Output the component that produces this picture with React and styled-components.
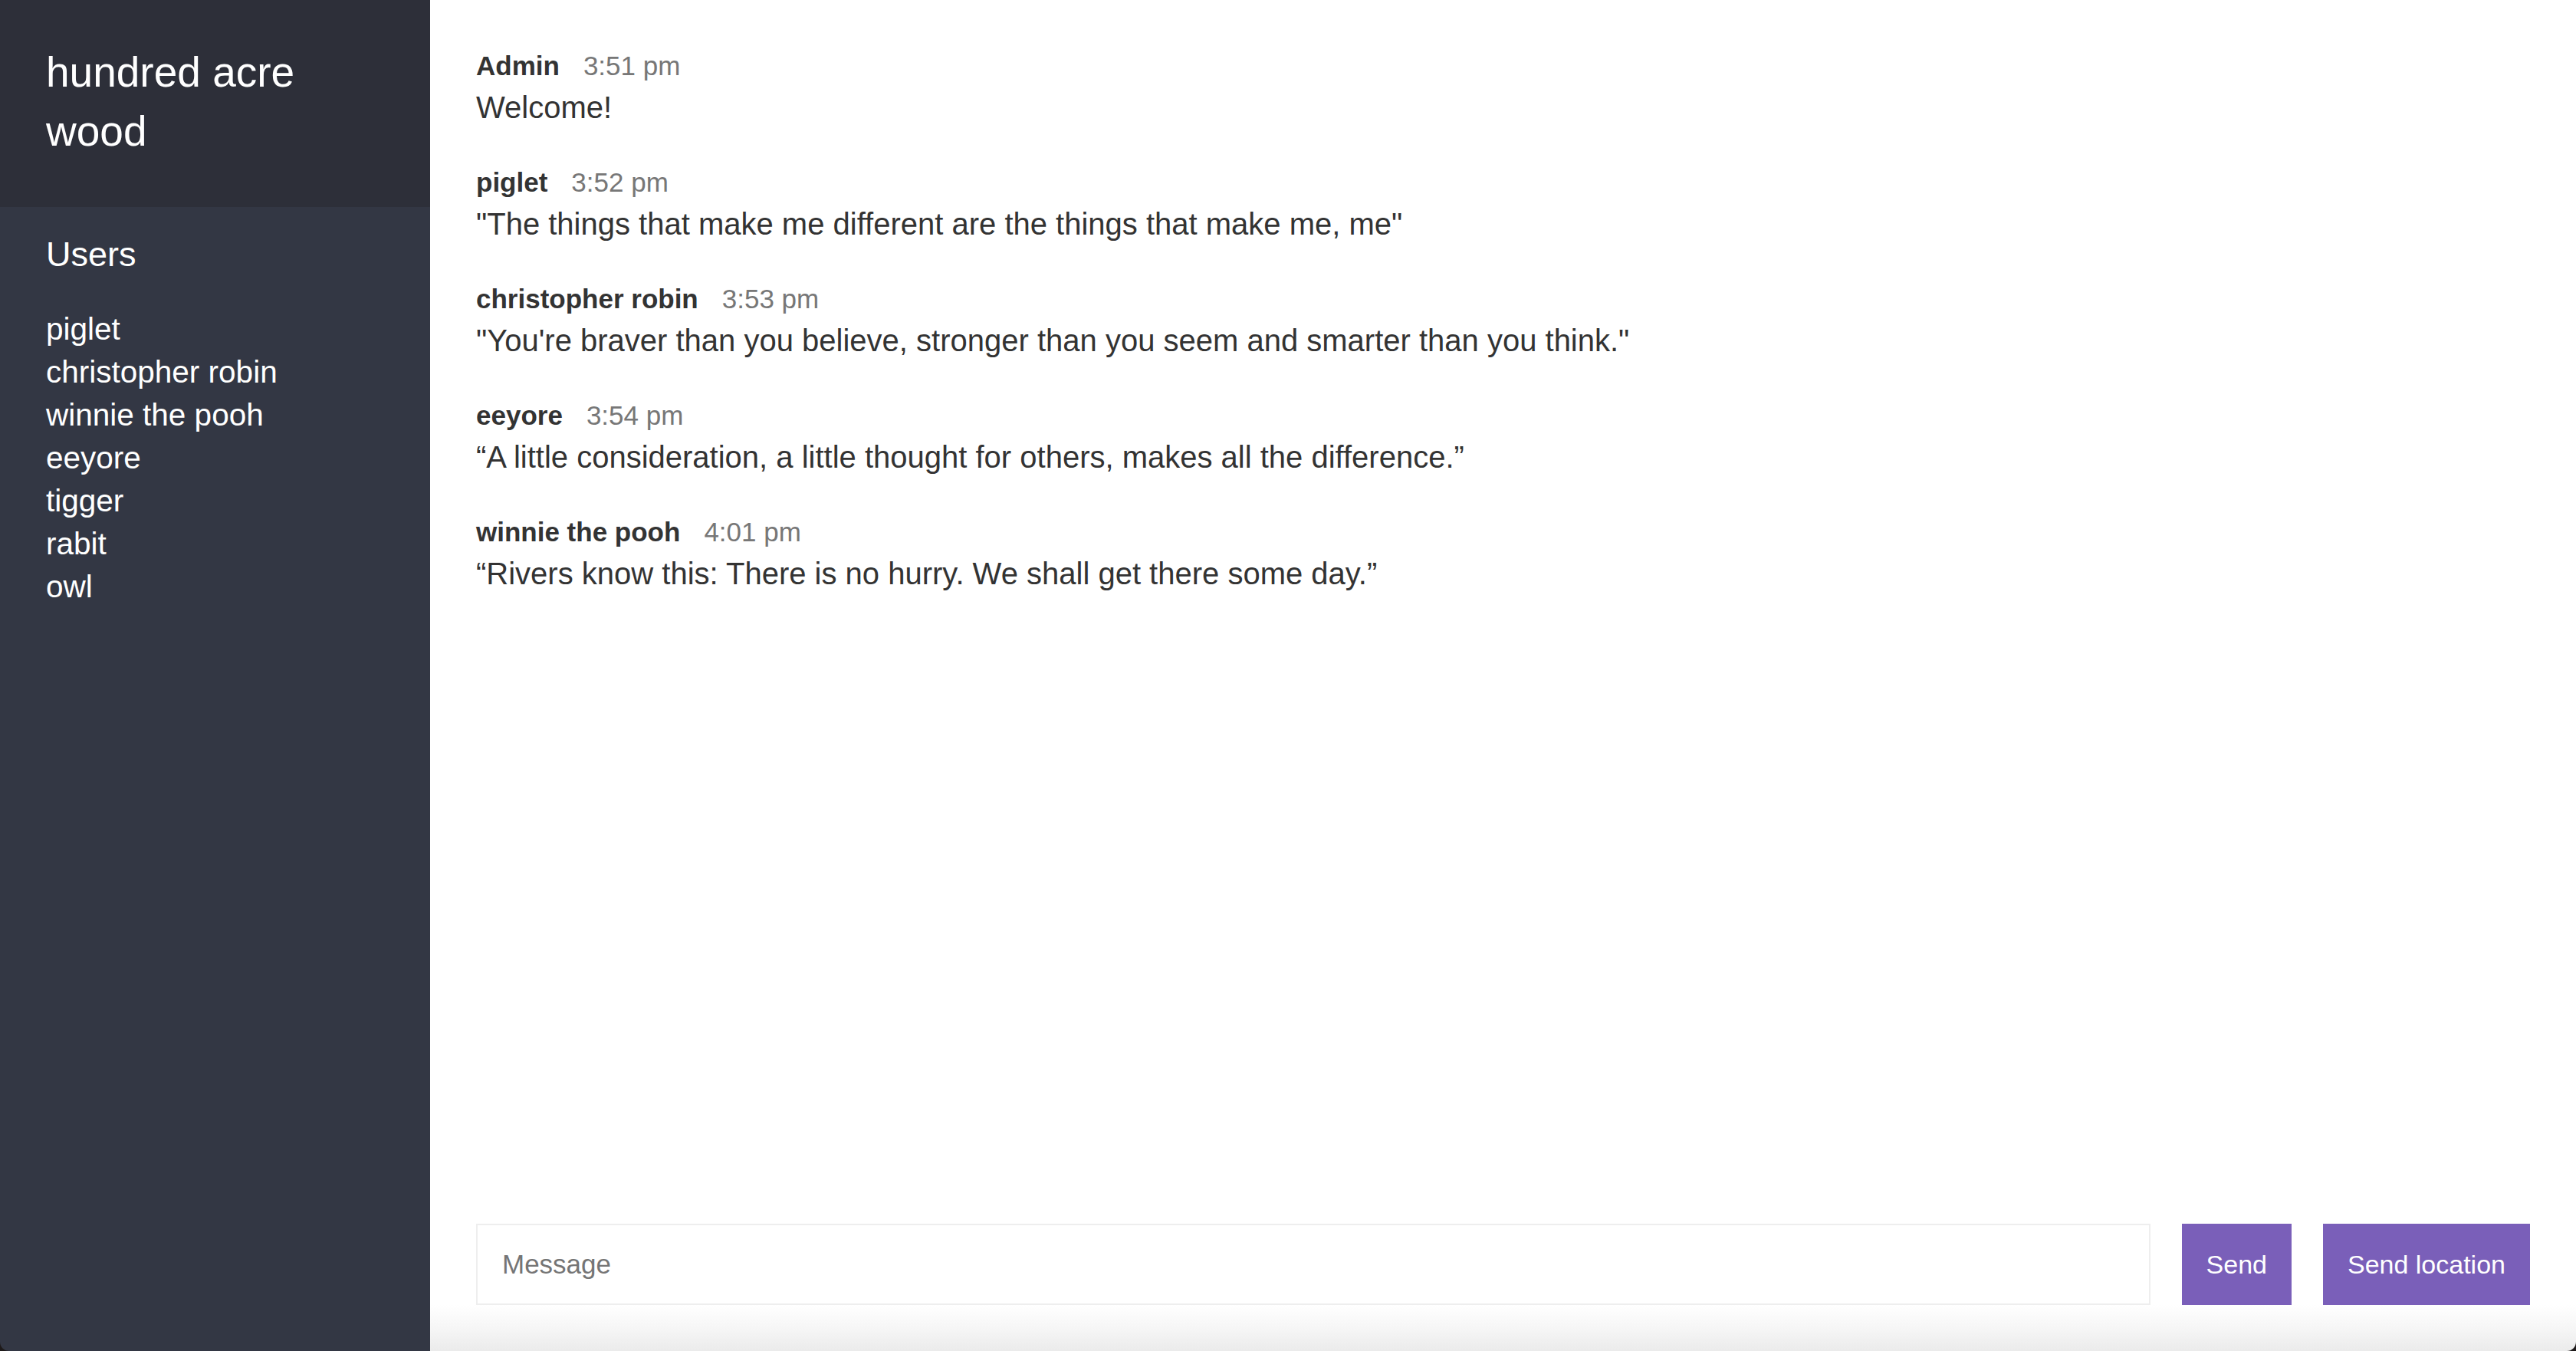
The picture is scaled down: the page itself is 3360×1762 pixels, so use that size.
import React from "react";
import styled, { createGlobalStyle } from "styled-components";

const GlobalStyle = createGlobalStyle`
  * { box-sizing: border-box; }
  html, body { margin: 0; padding: 0; height: 100%; }
  body {
    background: #1e1a1a;
    font-family: "Liberation Sans", Arial, Helvetica, sans-serif;
    -webkit-font-smoothing: antialiased;
  }
  #root { height: 100%; }
`;

const Window = styled.div`
  display: grid;
  grid-template-columns: 561px 1fr;
  height: 1762px;
  border-radius: 0 0 12px 12px;
  overflow: hidden;
`;

const Sidebar = styled.aside`
  background: #333744;
  color: #fff;
  display: flex;
  flex-direction: column;
`;

const RoomHeader = styled.div`
  background: #2d2f39;
  padding: 56px 60px 60px;
  font-size: 55px;
  line-height: 77px;
  font-weight: 400;
  height: 270px;
`;

const SectionTitle = styled.h3`
  margin: 30px 0 0;
  padding: 0 60px;
  font-size: 45px;
  line-height: 63px;
  font-weight: 400;
`;

const UserList = styled.ul`
  list-style: none;
  margin: 38px 0 0;
  padding: 0 60px;
`;

const UserItem = styled.li`
  font-size: 40.5px;
  line-height: 56px;
`;

const Main = styled.main`
  display: flex;
  flex-direction: column;
  background: linear-gradient(
    to bottom,
    #ffffff 0,
    #ffffff calc(100% - 60px),
    #f6f6f6 calc(100% - 30px),
    #ebebeb 100%
  );
  min-width: 0;
`;

const Messages = styled.ol`
  list-style: none;
  margin: 0;
  padding: 62px 60px 0;
  flex: 1;
  overflow: hidden;
`;

const Message = styled.li`
  margin-bottom: 46px;
`;

const Meta = styled.div`
  display: flex;
  align-items: baseline;
  gap: 31px;
  font-size: 35px;
  line-height: 48px;
  margin-bottom: 3px;
`;

const Name = styled.span`
  font-weight: 700;
  color: #333;
`;

const Time = styled.span`
  color: #777;
`;

const Text = styled.p`
  margin: 0;
  font-size: 40px;
  line-height: 55px;
  color: #333;
`;

const Compose = styled.form`
  display: flex;
  gap: 41px;
  padding: 0 60px 60px;
  height: 166px;
`;

const Input = styled.input`
  flex: 1;
  height: 106px;
  border: 2px solid #eeeeee;
  background: transparent;
  padding: 0 32px;
  font-family: inherit;
  font-size: 35px;
  color: #333;
  outline: none;
  &::placeholder { color: #757575; }
`;

const Button = styled.button`
  height: 106px;
  border: none;
  background: #7a5fb9;
  color: #fff;
  font-family: inherit;
  font-size: 34px;
  padding: 0 32px;
  cursor: pointer;
`;

const users = [
  "piglet",
  "christopher robin",
  "winnie the pooh",
  "eeyore",
  "tigger",
  "rabit",
  "owl",
];

const messages = [
  { name: "Admin", time: "3:51 pm", text: "Welcome!" },
  {
    name: "piglet",
    time: "3:52 pm",
    text: "\"The things that make me different are the things that make me, me\"",
  },
  {
    name: "christopher robin",
    time: "3:53 pm",
    text: "\"You're braver than you believe, stronger than you seem and smarter than you think.\"",
  },
  {
    name: "eeyore",
    time: "3:54 pm",
    text: "“A little consideration, a little thought for others, makes all the difference.”",
  },
  {
    name: "winnie the pooh",
    time: "4:01 pm",
    text: "“Rivers know this: There is no hurry. We shall get there some day.”",
  },
];

export default function App() {
  return (
    <>
      <GlobalStyle />
      <Window>
        <Sidebar>
          <RoomHeader>hundred acre wood</RoomHeader>
          <SectionTitle>Users</SectionTitle>
          <UserList>
            {users.map((u) => (
              <UserItem key={u}>{u}</UserItem>
            ))}
          </UserList>
        </Sidebar>
        <Main>
          <Messages>
            {messages.map((m) => (
              <Message key={m.name + m.time}>
                <Meta>
                  <Name>{m.name}</Name>
                  <Time>{m.time}</Time>
                </Meta>
                <Text>{m.text}</Text>
              </Message>
            ))}
          </Messages>
          <Compose onSubmit={(e) => e.preventDefault()}>
            <Input placeholder="Message" />
            <Button type="submit">Send</Button>
            <Button type="button">Send location</Button>
          </Compose>
        </Main>
      </Window>
    </>
  );
}
